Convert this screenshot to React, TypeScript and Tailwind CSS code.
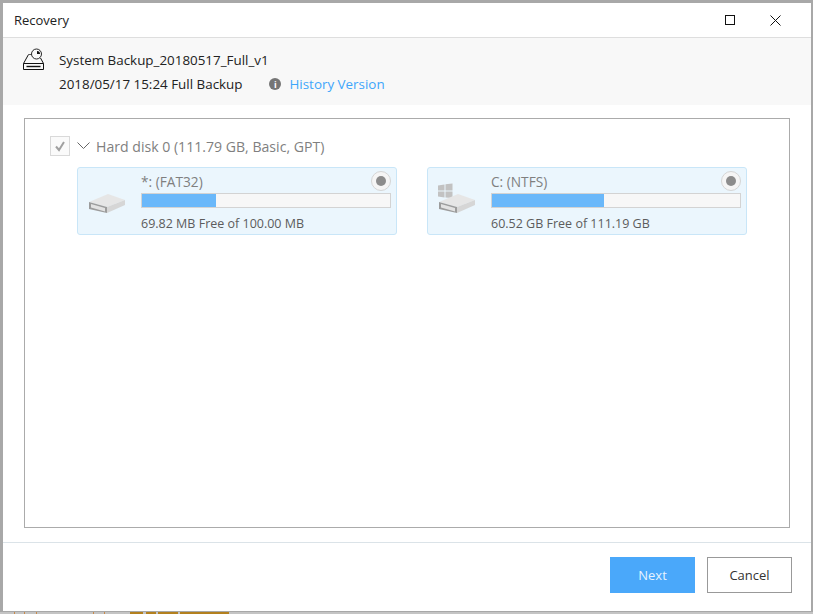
import React from "react";

function DriveShape() {
  return (
    <g>
      <path d="M1 10 L20 2 L37 8 L19 15 Z" fill="#e6e6e6" />
      <path d="M19 15 L37 8 L37 13 L19 21 Z" fill="#d6d6d6" />
      <path d="M1 10 L19 15 L19 21 L1 17 Z" fill="#9c9c9c" />
      <path d="M3 12 L17 16 L17 19.5 L3 15.5 Z" fill="#e2e2e2" />
    </g>
  );
}

function DriveIcon() {
  return (
    <svg width="38" height="22" viewBox="0 0 38 22" className="block">
      <DriveShape />
    </svg>
  );
}

function WinDriveIcon() {
  return (
    <svg width="38" height="32" viewBox="0 0 38 32" className="block">
      <path d="M0 3.5 L6.5 2.5 L6.5 8.5 L0 8.5 Z M7.5 2.3 L14.5 1.5 L14.5 8.5 L7.5 8.5 Z M0 9.5 L6.5 9.5 L6.5 15.5 L0 14.5 Z M7.5 9.5 L14.5 9.5 L14.5 16 L7.5 15.5 Z" fill="#c2c2c2" />
      <g transform="translate(0 10)">
        <DriveShape />
      </g>
    </svg>
  );
}

function Partition({ name, free, pct, icon, iconClass }: { name: string; free: string; pct: string; icon: React.ReactNode; iconClass: string }) {
  return (
    <div className="relative flex h-[68px] w-[320px] rounded-[3px] border border-[#c9e6f8] bg-[#ebf6fd]">
      <div className={iconClass}>{icon}</div>
      <div className="flex-1 pr-[5px] pt-[4px]">
        <div className="text-[13.7px] leading-[19px] text-[#7f7f7f]">{name}</div>
        <div className="mt-[2px] h-[15px] border border-[#d3d3d3] bg-[#f7f7f7]">
          <div className={`h-full bg-[#6ab8fa] ${pct}`} />
        </div>
        <div className="mt-[7px] text-[12.5px] leading-[17px] text-[#5c5c5c]">{free}</div>
      </div>
      <div className="absolute right-[5px] top-[3px] flex h-[20px] w-[20px] items-center justify-center rounded-full border border-[#d5d5d5] bg-[#f5f5f5]">
        <div className="h-[10px] w-[10px] rounded-full bg-[#8c8c8c]" />
      </div>
    </div>
  );
}

export default function App() {
  return (
    <div
      className="flex h-[614px] w-[813px] flex-col overflow-hidden bg-[#a8a8a8]"
      style={{ fontFamily: '"Open Sans", "Noto Sans", sans-serif' }}
    >
      <div className="ml-[3px] mr-[2px] mt-[3px] flex h-[608px] flex-col bg-white">
        <div className="flex h-[35px] shrink-0 items-center justify-between border-b border-[#dedede]">
          <span className="pl-[11px] pt-[1px] text-[13px] text-[#222]">Recovery</span>
          <div className="flex items-center gap-[35px] pr-[30px]">
            <div className="h-[10px] w-[10px] border border-[#111]" />
            <svg width="11" height="11" viewBox="0 0 11 11" className="block">
              <path d="M0.5 0.5 L10.5 10.5 M10.5 0.5 L0.5 10.5" stroke="#111" strokeWidth="1" />
            </svg>
          </div>
        </div>

        <div className="flex h-[67px] shrink-0 bg-[#f8f8f8]">
          <div className="pl-[20px] pt-[10px]">
            <svg width="21" height="22" viewBox="0 0 21 22" className="block" fill="none" stroke="#111" strokeWidth="1">
              <path d="M5.5 6.5 L0.5 15.5 L0.5 21.5 L20.5 21.5 L20.5 15.5 L17.5 10" />
              <path d="M0.5 15.5 L20.5 15.5" />
              <path d="M3.5 18.5 L17.5 18.5" strokeWidth="1.4" />
              <path d="M5.5 6.5 L8.5 6.5" stroke="#555" />
              <circle cx="13.5" cy="6" r="5" fill="#f8f8f8" strokeWidth="0.9" />
              <path d="M14 3 L14 6 L17 6 A3 3 0 0 0 14 3 Z" fill="#111" stroke="none" />
            </svg>
          </div>
          <div className="pl-[15px] pt-[10px] text-[13.4px] leading-[24px] text-[#222]">
            <div>System Backup_20180517_Full_v1</div>
            <div className="flex items-center">
              <span>2018/05/17 15:24 Full Backup</span>
              <span className="ml-[27px] flex h-[12px] w-[12px] items-center justify-center rounded-full bg-[#757575] text-[9px] font-bold leading-none text-white">i</span>
              <span className="ml-[8px] text-[#3ea6fb]">History Version</span>
            </div>
          </div>
        </div>

        <div className="flex-1 px-[21px] pt-[13px]">
          <div className="h-[410px] border border-[#ababab] pl-[25px] pt-[17px]">
            <div className="flex h-[20px] items-center">
              <div className="flex h-[20px] w-[20px] items-center justify-center border border-[#d9d9d9] bg-[#fafafa]">
                <svg width="12" height="12" viewBox="0 0 12 12" fill="none" className="block">
                  <path d="M2 6.5 L5 10 L10 2" stroke="#a0a0a0" strokeWidth="2" />
                </svg>
              </div>
              <svg width="13" height="8" viewBox="0 0 13 8" fill="none" className="ml-[7px] block">
                <path d="M0.5 0.5 L6.5 6.5 L12.5 0.5" stroke="#666" strokeWidth="1" />
              </svg>
              <span className="ml-[6px] pt-[1px] text-[14.1px] leading-[20px] text-[#7f7f7f]">Hard disk 0 (111.79 GB, Basic, GPT)</span>
            </div>
            <div className="ml-[27px] mt-[11px] flex gap-[30px]">
              <Partition name="*: (FAT32)" free="69.82 MB Free of 100.00 MB" pct="w-[30%]" icon={<DriveIcon />} iconClass="w-[63px] pl-[10px] pt-[24px]" />
              <Partition name="C: (NTFS)" free="60.52 GB Free of 111.19 GB" pct="w-[45%]" icon={<WinDriveIcon />} iconClass="w-[63px] pl-[10px] pt-[14px]" />
            </div>
          </div>
        </div>

        <div className="flex h-[69px] shrink-0 items-start justify-end gap-[12px] border-t border-[#dbe3e8] pr-[19px] pt-[14px] text-[13px]">
          <button className="h-[36px] w-[85px] bg-[#4aa8fa] pt-[1px] text-[#e6f3ff]">Next</button>
          <button className="h-[36px] w-[85px] border border-[#999] bg-white pt-[1px] text-[#333]">Cancel</button>
        </div>
      </div>
      <div className="mt-[1px] flex h-[2px] bg-[#c4c4c4]">
        <div className="ml-[14px] h-full w-[1px] bg-[#c98a4a]" />
        <div className="ml-[9px] h-full w-[1px] bg-[#c98a4a]" />
        <div className="ml-[11px] h-full w-[1px] bg-[#c98a4a]" />
        <div className="ml-[56px] h-full w-[1px] bg-[#c98a4a]" />
        <div className="ml-[10px] h-full w-[1px] bg-[#c98a4a]" />
        <div className="ml-[25px] h-full w-[13px] bg-[#b3801e]" />
        <div className="ml-[3px] h-full w-[10px] bg-[#b3801e]" />
        <div className="ml-[2px] h-full w-[20px] bg-[#b3801e]" />
        <div className="ml-[2px] h-full w-[49px] bg-[#b3801e]" />
      </div>
    </div>
  );
}
